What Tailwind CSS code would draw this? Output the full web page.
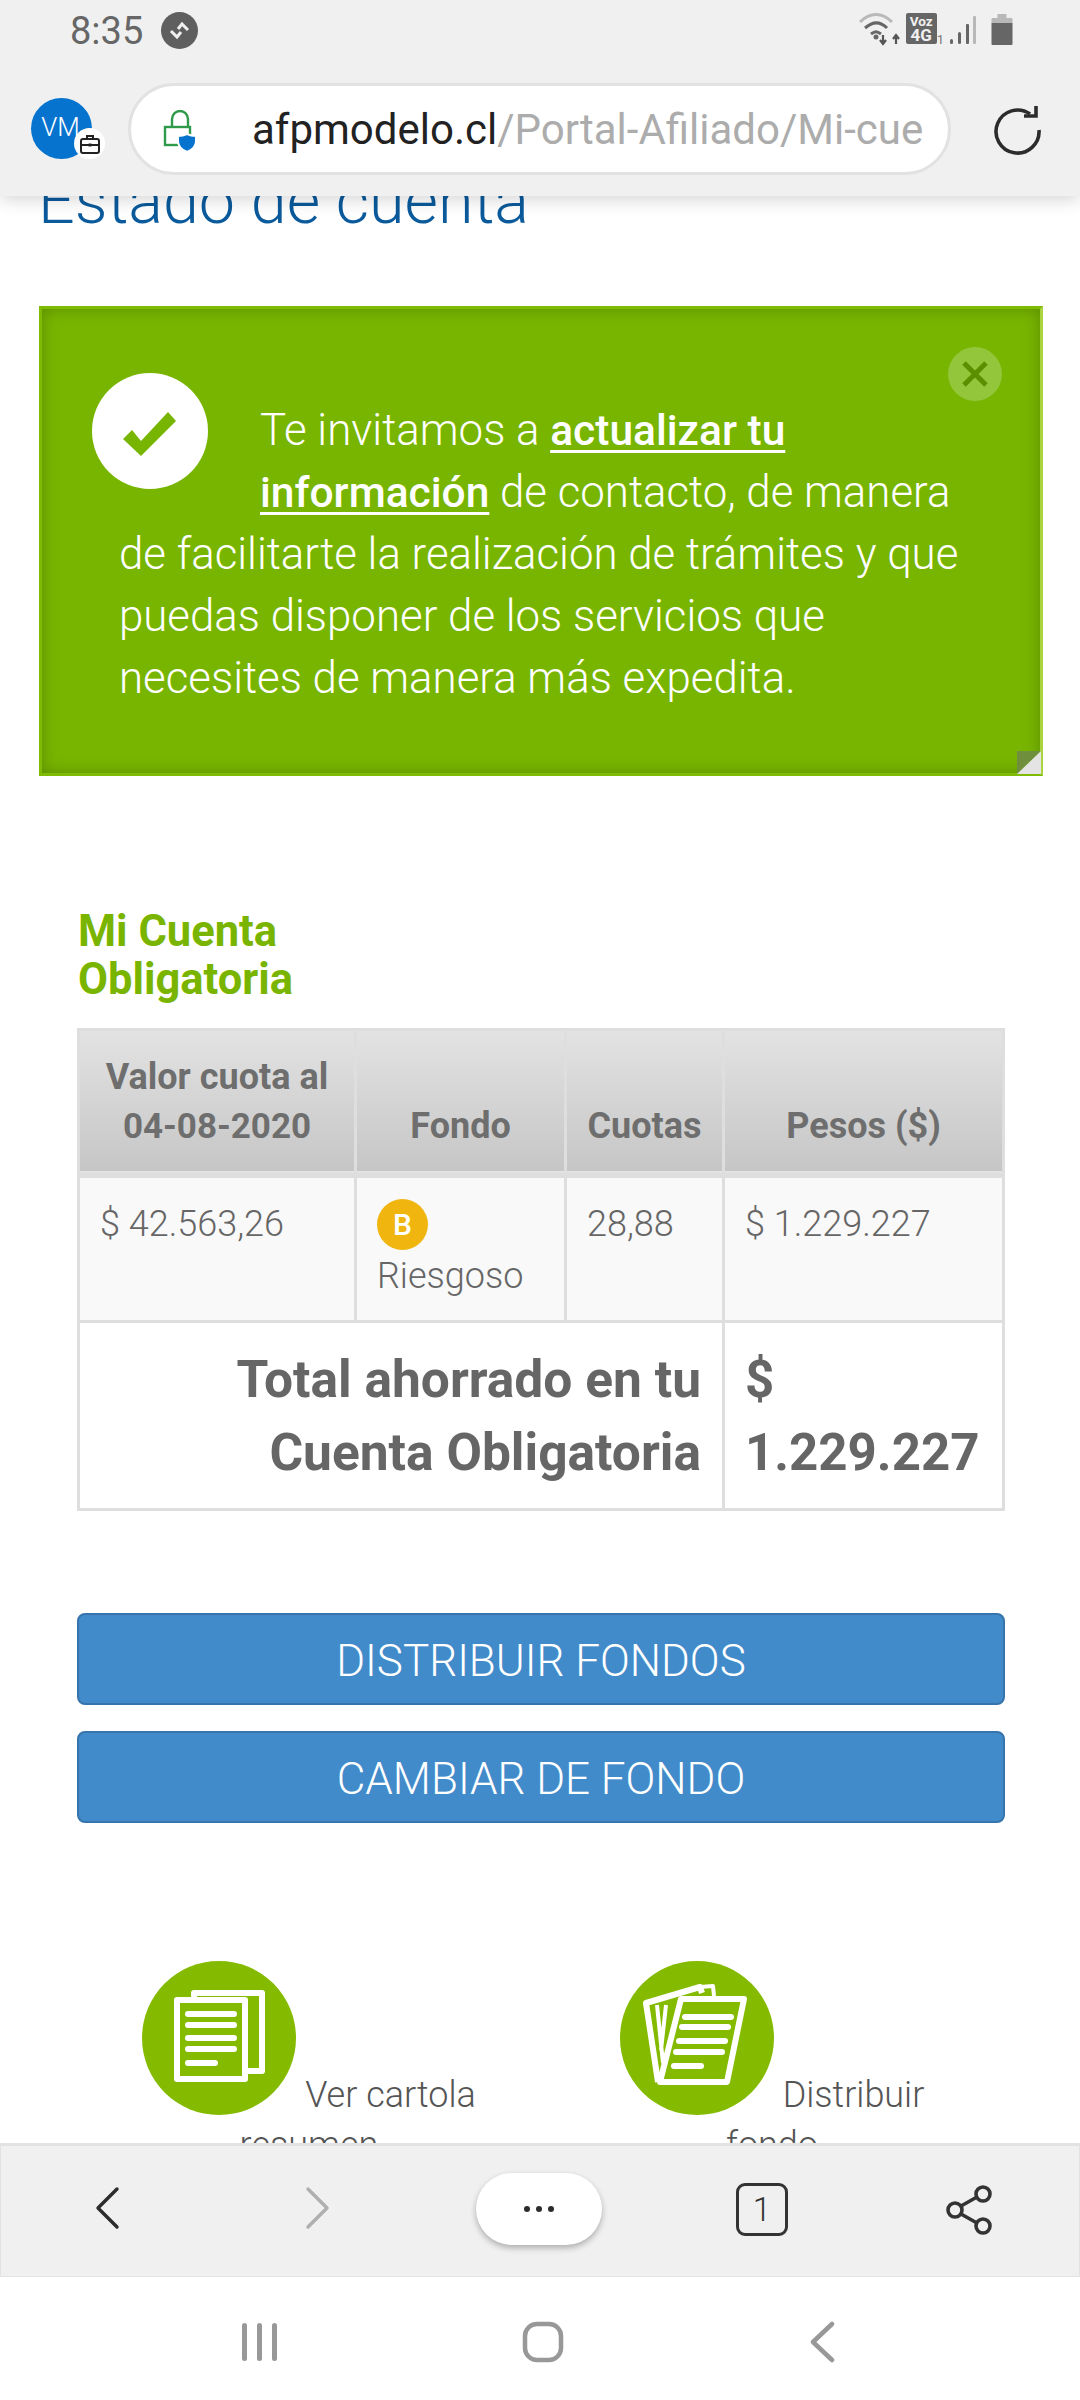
<!DOCTYPE html>
<html lang="es">
<head>
<meta charset="utf-8">
<script src="https://cdn.jsdelivr.net/npm/@tailwindcss/browser@4"></script>
</head>
<body class="m-0 bg-white">
<div class="relative w-[1080px] h-[2400px] overflow-hidden bg-white font-['Roboto',sans-serif]">

  <!-- page content -->
  <main class="flex flex-col pt-[164px]">
    <h1 class="pl-[38px] text-[64.6px] leading-[74px] font-light text-[#0a5a9c]">Estado de cuenta</h1>

    <section class="relative ml-[39px] mr-[37px] mt-[68px] h-[470px] border-[3px] border-[#7fbb05] border-r-[#a9d33f] bg-[#78b500] shadow-[inset_0_0_16px_rgba(70,110,0,0.55)] pl-[77px] pr-[70px] pt-[90px] text-[43.8px] leading-[62px] font-light text-white">
      <div class="float-left mr-[52px] ml-[-27px] mt-[-26px] mb-[-12px] flex h-[116px] w-[116px] items-center justify-center rounded-full bg-white">
        <svg class="h-[116px] w-[116px]" viewBox="0 0 116 116"><path d="M31 66l9-9 9 11 27-29 8 9-35 35z" fill="#78b500"/></svg>
      </div>
      <p class="m-0">Te invitamos a <a class="text-[42.5px] leading-none font-medium underline decoration-[3px] underline-offset-[5px]">actualizar tu información</a> de contacto, de manera de facilitarte la realización de trámites y que puedas disponer de los servicios que necesites de manera más expedita.</p>
      <div class="absolute right-[38px] top-[38px] flex h-[54px] w-[54px] items-center justify-center rounded-full bg-[#93c63a]">
        <svg class="h-[26px] w-[26px]" viewBox="0 0 26 26"><path d="M2 2l22 22M24 2L2 24" stroke="#5c8f00" stroke-width="5"/></svg>
      </div>
      <svg class="absolute bottom-[-1px] right-[-1px] h-[23px] w-[24px]" viewBox="0 0 24 23"><path d="M0 0h24L0 23z" fill="#6f8f3c"/><path d="M24 0v23H0z" fill="#e4e4e4"/></svg>
    </section>

    <section class="ml-[77px] mr-[75px] mt-[132px]">
      <h2 class="m-0 w-[320px] pl-[1px] text-[43.5px] leading-[48px] font-bold text-[#79b500]">Mi Cuenta Obligatoria</h2>
      <table class="mt-[24px] w-[925px] table-fixed border-collapse border-[3px] border-[#dedede] text-[36px] text-[#666]">
        <colgroup><col class="w-[277px]"><col class="w-[210px]"><col class="w-[158px]"><col class="w-[280px]"></colgroup>
        <thead>
          <tr class="h-[146px] bg-gradient-to-b from-[#e3e3e3] to-[#c6c6c6] border-b-[5px] border-[#dedede]">
            <th class="border-[3px] border-[#dedede] px-[20px] pb-[22px] align-bottom text-center text-[36px] leading-[49px] font-bold text-[#6e6e6e]">Valor cuota al <span class="text-[35px]">04-08-2020</span></th>
            <th class="border-[3px] border-[#dedede] px-[20px] pb-[22px] align-bottom text-center text-[36px] leading-[49px] font-bold text-[#6e6e6e]">Fondo</th>
            <th class="border-[3px] border-[#dedede] px-[10px] pb-[22px] align-bottom text-center text-[36px] leading-[49px] font-bold text-[#6e6e6e]">Cuotas</th>
            <th class="border-[3px] border-[#dedede] px-[20px] pb-[22px] align-bottom text-center text-[36px] leading-[49px] font-bold text-[#6e6e6e]">Pesos ($)</th>
          </tr>
        </thead>
        <tbody>
          <tr class="h-[146px] bg-[#f9f9f9] font-light">
            <td class="border-[3px] border-[#dedede] px-[20px] pt-[20px] align-top leading-[52px]">$ 42.563,26</td>
            <td class="border-[3px] border-[#dedede] px-[20px] pt-[21px] align-top leading-[52px]">
              <span class="flex h-[51px] w-[51px] items-center justify-center rounded-full bg-[#f0b60f] text-[30px] leading-none font-medium text-white">B</span>
              Riesgoso
            </td>
            <td class="border-[3px] border-[#dedede] px-[20px] pt-[20px] align-top leading-[52px]">28,88</td>
            <td class="border-[3px] border-[#dedede] px-[20px] pt-[20px] align-top leading-[52px]">$ 1.229.227</td>
          </tr>
          <tr class="h-[188px] bg-white text-[51px] leading-[73px] font-bold text-[#666]">
            <td colspan="3" class="border-[3px] border-[#dedede] px-[21px] text-right text-[51.5px]">Total ahorrado en tu Cuenta Obligatoria</td>
            <td class="border-[3px] border-[#dedede] px-[20px]">$ 1.229.227</td>
          </tr>
        </tbody>
      </table>

      <div class="mt-[102px] flex flex-col gap-[26px]">
        <button class="h-[92px] w-[928px] rounded-[8px] border-[2px] border-[#3574ac] bg-[#428bca] pt-[3px] text-center text-[44px] font-light text-white">DISTRIBUIR FONDOS</button>
        <button class="h-[92px] w-[928px] rounded-[8px] border-[2px] border-[#3574ac] bg-[#428bca] pt-[3px] text-center text-[44px] font-light text-white">CAMBIAR DE FONDO</button>
      </div>
    </section>

    <section class="ml-[77px] w-[928px] mt-[138px] grid grid-cols-2 text-[36px] leading-[50px] font-light text-[#555]">
      <div class="px-[40px] text-center">
        <span class="mr-[9px] inline-flex h-[154px] w-[154px] items-center justify-center rounded-full bg-[#84bb00] align-[-8px]">
          <svg class="h-[154px] w-[154px]" viewBox="0 0 154 154" fill="none" stroke="#fff" stroke-width="6" stroke-linejoin="round">
            <path d="M52 37v-5h68v78h-14"/>
            <rect x="35" y="39" width="68" height="79"/>
            <path d="M46 53h46M46 64h46M46 77h46M46 88h46M46 102h27" stroke-linecap="round"/>
          </svg>
        </span>Ver cartola resumen
      </div>
      <div class="pl-[40px] pr-[42px] text-center">
        <span class="mr-[9px] inline-flex h-[154px] w-[154px] items-center justify-center rounded-full bg-[#84bb00] align-[-8px]">
          <svg class="h-[154px] w-[154px]" viewBox="0 0 154 154" fill="none" stroke="#fff" stroke-linejoin="round">
            <path d="M61 38h63l-17 83H40z" stroke-width="6"/>
            <path d="M38 121L26 42l54-16 2 6" stroke-width="6"/>
            <path d="M80 26l13-1 1 10" stroke-width="4"/>
            <path d="M37 44l6 58M46 44l-5 45" stroke-width="4"/>
            <path d="M65 56h46M62 66h46M59 80h46M56 91h46M54 105h27" stroke-width="6" stroke-linecap="round"/>
          </svg>
        </span>Distribuir fondo
      </div>
    </section>
  </main>

  <!-- browser top bar overlay -->
  <header class="absolute inset-x-0 top-0 h-[196px] bg-[#f0f0f0] shadow-[0_4px_16px_rgba(0,0,0,0.16)]">
    <div class="absolute left-[70px] top-[9px] text-[38px] leading-[44px] text-[#666]">8:35</div>
    <div class="absolute left-[161px] top-[12px] flex h-[37px] w-[37px] items-center justify-center rounded-full bg-[#5f5f5f]">
      <svg class="h-[23px] w-[23px]" viewBox="0 0 23 23" fill="none" stroke="#f0f0f0" stroke-width="3"><path d="M3 12l6 6 4-5M20 11l-6-6-4 5"/></svg>
    </div>
    <div class="absolute right-[67px] top-[13px] flex items-start">
      <svg class="h-[34px] w-[42px]" viewBox="0 0 42 34" fill="none"><path d="M2 9C12-1 24-1 34 9" stroke="#b9b9b9" stroke-width="3"/><path d="M7 15c8-7 15-7 22 0M13 21c4-3 6-3 10 0" stroke="#666" stroke-width="3"/><circle cx="18" cy="24" r="2.5" fill="#666"/><path d="M25 22v9M22 27l3 4 3-4M38 31v-9M35 26l3-4 3 4" stroke="#555" stroke-width="2.2"/></svg>
      <div class="relative ml-[6px] flex h-[31px] w-[31px] flex-col items-center justify-center rounded-[2px] bg-[#666] text-[13.5px] leading-[13px] font-bold text-[#f0f0f0]"><span>Voz</span><span class="text-[17px] leading-[15px]">4G</span></div>
      <span class="mt-[20px] text-[13px] leading-[13px] text-[#777]">1</span>
      <svg class="ml-[5px] mt-[2px] h-[30px] w-[28px]" viewBox="0 0 28 30"><g fill="#666"><rect x="1" y="24" width="3" height="5" rx="1.5"/><rect x="9" y="17" width="3" height="12" rx="1.5"/><rect x="17" y="9" width="3" height="20" rx="1"/></g><rect x="24" y="1" width="3" height="28" rx="1" fill="#b8b8b8"/></svg>
      <svg class="ml-[14px] mt-[1px] h-[31px] w-[22px]" viewBox="0 0 21 31"><path d="M6 0h9v4h5a1 1 0 0 1 1 1v4H0V5a1 1 0 0 1 1-1h5z" fill="#b8b8b8"/><path d="M0 9h21v21a1 1 0 0 1-1 1H1a1 1 0 0 1-1-1z" fill="#666"/></svg>
    </div>

    <div class="absolute left-[31px] top-[98px] flex h-[61px] w-[61px] items-center justify-center rounded-full bg-[#0673cf] text-[26px] font-light text-white">
      <span class="-translate-x-[1px] -translate-y-[1px]">VM</span>
    </div>
    <div class="absolute left-[74px] top-[128px] flex h-[31px] w-[31px] items-center justify-center rounded-full bg-white">
      <svg class="h-[22px] w-[22px]" viewBox="0 0 22 22" fill="none" stroke="#222" stroke-width="2"><rect x="2" y="6" width="18" height="14" rx="2"/><path d="M8 6V3h6v3M2 12h18"/><rect x="9.5" y="10.5" width="3" height="3" fill="#222" stroke="none"/></svg>
    </div>

    <div class="absolute left-[128px] top-[83px] flex h-[92px] w-[823px] items-center overflow-hidden rounded-full border-[3px] border-[#e2e2e2] bg-white pl-[121px] text-[42px] whitespace-nowrap">
      <span class="text-[#222]">afpmodelo.cl</span><span class="text-[#acacac]">/Portal-Afiliado/Mi-cue</span>
    </div>
    <svg class="absolute left-[163px] top-[110px] h-[42px] w-[34px]" viewBox="0 0 34 42" fill="none"><path d="M9 17V9a8 8 0 0 1 16 0v8" stroke="#2f9a4a" stroke-width="2.4"/><rect x="2" y="17" width="25" height="18" stroke="#2f9a4a" stroke-width="2.4"/><path d="M15 26c4 0 7-1 9-2 2 1 5 2 9 2v5c0 5-4 9-9 11-5-2-9-6-9-11z" fill="#0673cf" stroke="#fff" stroke-width="2"/></svg>
    <svg class="absolute left-[992px] top-[105px] h-[52px] w-[52px]" viewBox="0 0 52 52" fill="none" stroke="#2c2c2c" stroke-width="3.6"><path d="M38 9A21.5 21.5 0 1 0 47 25"/><path d="M32 11h12V1"/></svg>
  </header>

  <!-- browser bottom bar overlay -->
  <nav class="absolute inset-x-0 top-[2143px] flex h-[134px] items-center border-x border-t-[3px] border-b border-[#e2e2e2] bg-[#f0f0f0]">
    <svg class="absolute left-[92px] top-[40px] h-[44px] w-[30px]" viewBox="0 0 30 44" fill="none" stroke="#2c2c2c" stroke-width="3.4" stroke-linecap="round" stroke-linejoin="round"><path d="M24 3L5 22l19 19"/></svg>
    <svg class="absolute left-[301px] top-[40px] h-[44px] w-[30px]" viewBox="0 0 30 44" fill="none" stroke="#afafaf" stroke-width="3.4" stroke-linecap="round" stroke-linejoin="round"><path d="M6 3l19 19L6 41"/></svg>
    <div class="absolute left-[475px] top-[27px] flex h-[72px] w-[126px] items-center justify-center gap-[6px] rounded-full bg-white shadow-[0_3px_6px_rgba(0,0,0,0.28)]">
      <span class="h-[6px] w-[6px] rounded-full bg-[#2c2c2c]"></span><span class="h-[6px] w-[6px] rounded-full bg-[#2c2c2c]"></span><span class="h-[6px] w-[6px] rounded-full bg-[#2c2c2c]"></span>
    </div>
    <div class="absolute left-[735px] top-[37px] flex h-[53px] w-[52px] items-center justify-center rounded-[9px] border-[3px] border-[#333] text-[33px] font-light text-[#333]">1</div>
    <svg class="absolute left-[944px] top-[38px] h-[52px] w-[50px]" viewBox="0 0 50 52" fill="none" stroke="#333" stroke-width="3.6"><circle cx="10" cy="26" r="7"/><circle cx="38" cy="10" r="7"/><circle cx="38" cy="42" r="7"/><path d="M16 22l16-9M16 30l16 9"/></svg>
  </nav>

  <!-- android nav overlay -->
  <div class="absolute inset-x-0 top-[2277px] h-[123px] bg-white">
    <svg class="absolute left-[240px] top-[44px] h-[42px] w-[40px]" viewBox="0 0 40 42" fill="#989898"><rect x="2" y="2" width="5" height="38" rx="2.5"/><rect x="17" y="2" width="5" height="38" rx="2.5"/><rect x="32" y="2" width="5" height="38" rx="2.5"/></svg>
    <svg class="absolute left-[522px] top-[44px] h-[42px] w-[42px]" viewBox="0 0 42 42" fill="none" stroke="#989898" stroke-width="4.5"><rect x="3" y="3" width="36" height="36" rx="12"/></svg>
    <svg class="absolute left-[808px] top-[44px] h-[42px] w-[28px]" viewBox="0 0 28 42" fill="none" stroke="#989898" stroke-width="4.5" stroke-linecap="round" stroke-linejoin="round"><path d="M24 3L5 21l19 18"/></svg>
  </div>
</div>
</body>
</html>
